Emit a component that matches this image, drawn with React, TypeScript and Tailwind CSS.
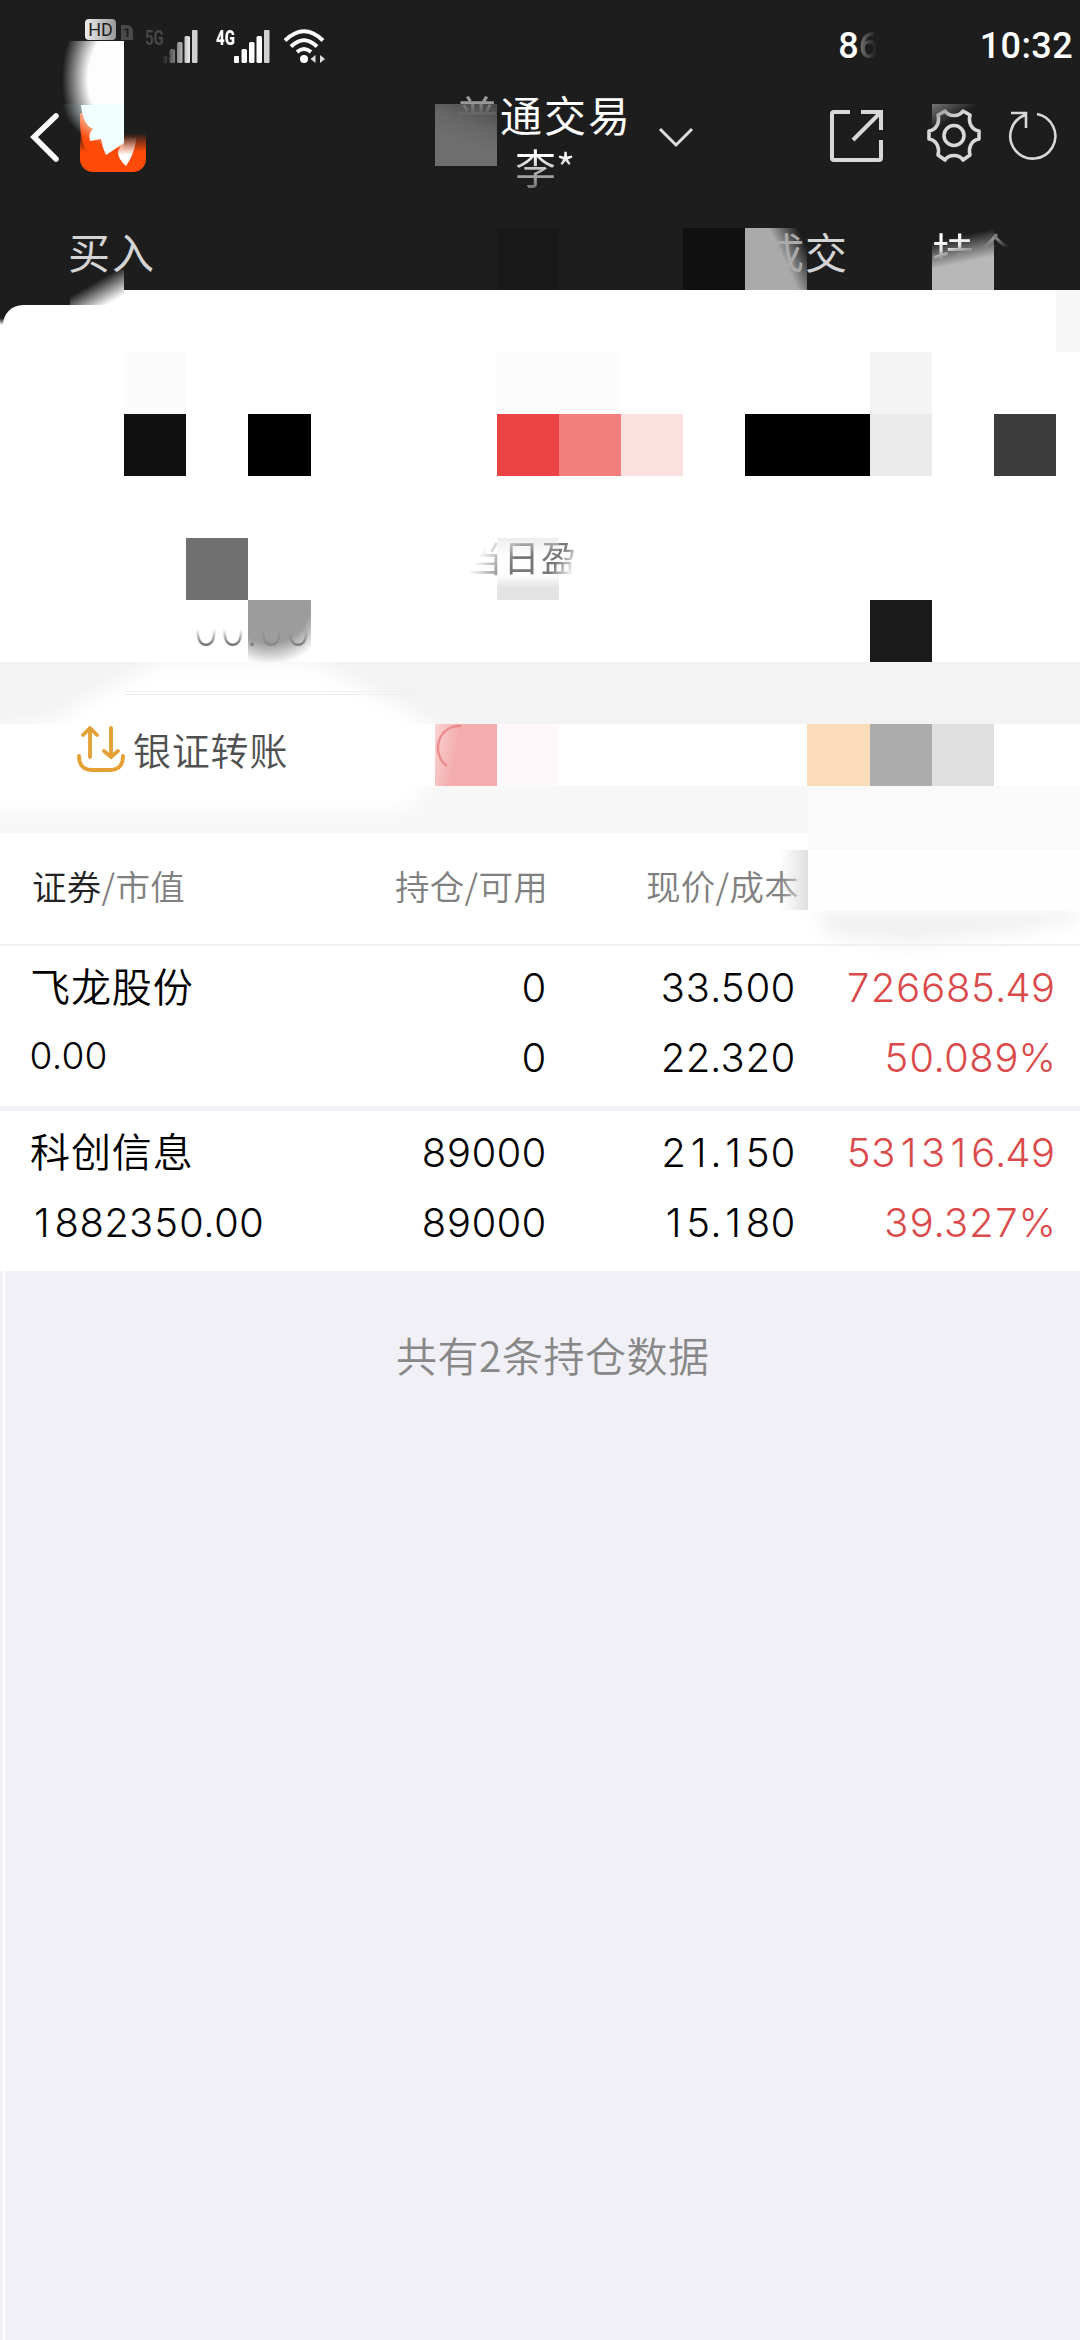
import clsx from 'clsx';

type Holding = {
  name: string;
  marketValue: string;
  total: string;
  available: string;
  price: string;
  cost: string;
  profit: string;
  ratio: string;
  smallValue?: boolean;
};

const HOLDINGS: Holding[] = [
  {
    name: '飞龙股份',
    marketValue: '0.00',
    total: '0',
    available: '0',
    price: '33.500',
    cost: '22.320',
    profit: '726685.49',
    ratio: '50.089%',
    smallValue: true,
  },
  {
    name: '科创信息',
    marketValue: '1882350.00',
    total: '89000',
    available: '89000',
    price: '21.150',
    cost: '15.180',
    profit: '531316.49',
    ratio: '39.327%',
  },
];

// Redaction tiles, placed on a 62px grid that starts below the status bar.
const TILES = [
  'col-start-8 row-start-1 bg-[linear-gradient(200deg,#6e6e6e00_0%,#6e6e6ecc_35%,#6e6e6e_60%)] bg-[#6e6e6e88]',
  'col-start-16 row-start-1 bg-[linear-gradient(150deg,#777_0%,#77777700_28%)]',
  'col-start-9 row-start-3 bg-[#191919]',
  'col-start-12 row-start-3 bg-[#101010]',
  'col-start-13 row-start-3 bg-[linear-gradient(65deg,#aaa_58%,#aaaaaa00_90%)]',
  'col-start-16 row-start-3 bg-[linear-gradient(168deg,#b8b8b800_18%,#b8b8b8_55%)]',
  'col-start-18 row-start-4 bg-[#f7f7f7]',
  'col-start-3 row-start-5 bg-[#fbfbfb]',
  'col-start-9 row-start-5 col-span-2 bg-[#fcfcfc]',
  'col-start-15 row-start-5 bg-[#f4f4f4]',
  'col-start-3 row-start-6 bg-[#101010]',
  'col-start-5 row-start-6 bg-black',
  'col-start-9 row-start-6 bg-[#ec4444]',
  'col-start-10 row-start-6 bg-[#f47e7e]',
  'col-start-11 row-start-6 bg-[#fce0e0]',
  'col-start-13 row-start-6 col-span-2 bg-black',
  'col-start-15 row-start-6 bg-[#eaeaea]',
  'col-start-17 row-start-6 bg-[#3c3c3c]',
  'col-start-4 row-start-8 bg-[#707070]',
  'col-start-9 row-start-8 bg-[linear-gradient(180deg,#e2e2e299_0%,#ffffff00_30%,#ffffff00_60%,#e3e3e3_80%)]',
  'col-start-15 row-start-9 bg-[#1a1a1a]',
  'col-start-8 row-start-11 bg-[linear-gradient(100deg,#f4adad88_0%,#f4adad_35%)]',
  'col-start-9 row-start-11 bg-[#fef8fa]',
  'col-start-14 row-start-11 bg-[#fbddba]',
  'col-start-15 row-start-11 bg-[#acacac]',
  'col-start-16 row-start-11 bg-[#e0e0e0]',
];

function SignalBars({ className }: { className?: string }) {
  return (
    <svg className={clsx('h-[33px] w-[36px]', className)} viewBox="0 0 36 33" fill="#fff">
      <rect x="0" y="26" width="5" height="7" rx="1" />
      <rect x="7.5" y="19" width="5.5" height="14" rx="1.5" />
      <rect x="15" y="12" width="5.5" height="21" rx="1.5" />
      <rect x="22.5" y="6" width="5.5" height="27" rx="1.5" />
      <rect x="30" y="0" width="5.5" height="33" rx="1" opacity=".8" />
    </svg>
  );
}

function StatusBar() {
  return (
    <div className="flex h-[90px] items-start text-white">
      <div className="ml-[85px] mt-[19px] flex h-[21px] w-[31px] items-center justify-center rounded-[4px] bg-linear-to-r from-[#eee] to-[#999] font-['Roboto',sans-serif] text-[18px] text-[#1d1d1d]">
        HD
      </div>
      <div className="ml-[5px] mt-[25px] h-[15px] w-3 rounded-tr-md bg-[#4a4a4a] text-center font-['Roboto',sans-serif] text-[13px] leading-[15px] font-bold text-[#1d1d1d]">
        1
      </div>
      <div className="ml-3 mt-[28px] w-[18px] origin-left scale-x-[.75] font-['Roboto',sans-serif] text-[20px] leading-[20px] font-bold text-[#484848]">
        5G
      </div>
      <SignalBars className="-ml-[1px] mt-[30px] [mask-image:linear-gradient(90deg,transparent_0%,#fff_85%)]" />
      <div className="ml-[18px] mt-[28px] w-[18px] origin-left scale-x-[.75] font-['Roboto',sans-serif] text-[20px] leading-[20px] font-black">
        4G
      </div>
      <SignalBars className="mt-[30px]" />
      <svg
        className="ml-[14px] mt-[29px] h-[35px] w-[42px]"
        viewBox="0 0 42 35"
        fill="none"
        stroke="#fff"
        strokeWidth="4"
      >
        <path d="M1 11.500Q20 -7 39 11.500M7 17.500Q20 5 33 17.500M13 23Q20 17 27 23" />
        <circle cx="20" cy="30" r="4" fill="#fff" stroke="none" />
        <path d="M26.500 30l5-4v8zM41 30l-5-4v8z" fill="#ddd" stroke="none" />
      </svg>
      <div className="ml-auto mt-[25px] flex pr-[7px] font-['Roboto',sans-serif] text-[36px] leading-[42px] font-medium">
        <span>8</span>
        <span className="w-[121px] bg-linear-to-r from-[#777] to-[#1d1d1d] to-15% bg-clip-text text-transparent">
          6
        </span>
        <span className="tracking-[.4px]">10:32</span>
      </div>
    </div>
  );
}

function TitleBar() {
  return (
    <div className="flex h-[110px] items-start">
      <svg
        className="ml-[29px] mt-[22px] h-[52px] w-[32px]"
        viewBox="0 0 32 52"
        fill="none"
        stroke="#fff"
        strokeWidth="5.500"
        strokeLinecap="round"
      >
        <path d="M27 4L5 25L27 47" />
      </svg>
      <svg className="ml-[19px] mt-[15px] h-[67px] w-[67px]" viewBox="0 0 67 67">
        <defs>
          <linearGradient id="logo" x1="0" y1="0" x2="0" y2="1">
            <stop offset=".42" stopColor="#ff4a08" stopOpacity="0" />
            <stop offset=".7" stopColor="#ff4a08" />
          </linearGradient>
          <linearGradient id="petal" x1="0" y1="0" x2="0" y2="1">
            <stop offset=".2" stopColor="#ccc" stopOpacity="0" />
            <stop offset=".7" stopColor="#fff" />
          </linearGradient>
        </defs>
        <rect x="0" y="0" width="66" height="67" rx="13" fill="url(#logo)" />
        <path d="M0 8H44V50H14Q0 46 0 16Z" fill="#ff4a08" />
        <path d="M4 0H44V38L26 50Q22 42 21 34L10 36Q8 28 13 24Q3 20 1 0Z" fill="#f0ffff" />
        <path d="M44 30L57 24Q57 46 46 61Q38 54 38 47Z" fill="url(#petal)" />
      </svg>
      <div className="-mt-[2px] ml-[309px] w-[176px] text-[42px] leading-[52px] text-white">
        <div className="whitespace-nowrap tracking-[2px]">
          <span className="text-[#999] [mask-image:linear-gradient(180deg,#000_35%,transparent_60%)]">
            普
          </span>
          通交易
        </div>
        <div className="bg-linear-to-b from-white from-30% to-[#777] to-90% bg-clip-text pl-[59px] text-[41px] text-transparent">
          李*
        </div>
      </div>
      <svg
        className="ml-[26px] mt-[35px] h-[24px] w-[36px]"
        viewBox="0 0 36 24"
        fill="none"
        stroke="#ddd"
        strokeWidth="3"
      >
        <path d="M2 4L18 20L34 4" />
      </svg>
      <div className="ml-auto mt-[17px] flex items-start">
        <svg
          className="h-[58px] w-[58px]"
          viewBox="0 0 58 58"
          fill="none"
          stroke="#d8d8d8"
          strokeWidth="4"
        >
          <path d="M23 5H7Q5 5 5 7V51Q5 53 7 53H52Q54 53 54 51V33" />
          <path d="M34 5H54V23M54 5L26 33" />
        </svg>
        <svg
          className="ml-[40px] h-[58px] w-[58px]"
          viewBox="0 0 58 58"
          fill="none"
          stroke="#d8d8d8"
          strokeWidth="3.600"
          strokeLinejoin="round"
        >
          <path d="M13 8L20 4C24 10 34 10 38 4L45 8C43 16 47 23 54 24V32C47 33 43 40 45 48L38 53C34 47 24 47 20 53L13 48C15 40 11 33 4 32V24C11 23 15 16 13 8Z" />
          <circle cx="29" cy="28.500" r="10" />
        </svg>
        <svg
          className="ml-[22px] mr-[21px] h-[56px] w-[54px]"
          viewBox="0 0 54 56"
          fill="none"
          stroke="#d8d8d8"
          strokeWidth="2.600"
        >
          <path d="M32 7A22.500 22.500 0 1 1 20 8M6 6H21V21" />
        </svg>
      </div>
    </div>
  );
}

function Tabs() {
  return (
    <nav className="flex h-[90px] items-start pt-[22px] text-[42px] leading-[57px] text-[#d4d4d4]">
      <span className="ml-[68px] tracking-[2px]">买入</span>
      <span className="ml-[606px] tracking-[1px]">
        <span className="text-[#aaa]">成</span>交
      </span>
      <span className="ml-[84px] text-white [mask-image:linear-gradient(165deg,#000_45%,transparent_60%)]">
        挂
      </span>
      <span className="[mask-image:linear-gradient(180deg,#0008_30%,transparent_45%)]">个</span>
    </nav>
  );
}

function Summary() {
  return (
    <section className="flex h-[372px] items-start bg-white">
      <div className="ml-[194px] mt-[322px] w-[120px] font-['Inter',sans-serif] text-[39px] leading-[40px] font-light tracking-[2.7px] text-[#444] [mask-image:linear-gradient(180deg,transparent_42%,#000_95%)]">
        00.00
      </div>
      <div className="ml-[152px] mt-[240px] w-[120px] text-[36px] leading-[52px] tracking-[1.5px] text-[#777] [mask-image:linear-gradient(120deg,transparent_18%,#000_44%,#000_72%,transparent_88%)]">
        当日盈
      </div>
    </section>
  );
}

function Transfer() {
  return (
    <section className="flex h-[187px] flex-col bg-white">
      <div className="h-[62px] bg-[#f3f3f3]" />
      <div className="h-[62px] bg-white" />
      <div className="flex h-[47px]">
        <div className="w-[808px] bg-[#f7f7f7]" />
        <div className="flex-1 bg-[#fafafa]" />
      </div>
    </section>
  );
}

// The transfer button glows over the grey bands above and below it.
function TransferButton() {
  return (
    <div className="absolute top-[662px] left-0 h-[148px] w-[440px]">
      <div className="absolute top-0 -left-[20px] h-[148px] w-[460px] blur-[10px]">
        <div className="h-full bg-white [clip-path:polygon(42%_-5%,68%_-5%,84%_18%,100%_46%,98%_78%,94%_100%,0_100%,0_46%,14%_42%,30%_14%)]" />
      </div>
      <div className="absolute top-[29px] left-[124px] h-[4px] w-[290px] border-y border-[#f0f0f0]" />
      <div className="relative flex items-start pt-[62px] pl-[75px]">
        <svg
          className="h-[50px] w-[52px]"
          viewBox="0 0 52 50"
          fill="none"
          stroke="#e4a035"
          strokeWidth="3.800"
          strokeLinecap="round"
          strokeLinejoin="round"
        >
          <path d="M15 33V5M8 11L15 4L22 11M36 4V32M29 27L36 33L43 27" />
          <path d="M4 32Q4 46 17 46H35Q48 46 48 32" />
        </svg>
        <span className="ml-[6px] -mt-[3px] text-[38px] leading-[56px] font-[350] tracking-[.8px] text-[#505050]">
          银证转账
        </span>
      </div>
    </div>
  );
}

function TableHeader() {
  return (
    <div className="flex h-[97px] items-start border-b-2 border-[#f0f0f5] pt-[10px] text-[34.5px] leading-[52px] font-[350] tracking-[.3px] text-[#808080]">
      <span className="w-[300px] pl-[32px]">
        <span className="text-[#222]">证券</span>/市值
      </span>
      <span className="w-[248px] text-right">持仓/可用</span>
      <span className="w-[251px] text-right">现价/成本</span>
    </div>
  );
}

// Inter's tabular "1" has a foot; use the plain one, centred in a digit's width.
function Digits({ value }: { value: string }) {
  return (
    <>
      {value.split(/(1)/).map((part, i) =>
        part === '1' ? (
          <span
            key={i}
            className="inline-block w-[24.7px] text-center [font-feature-settings:'tnum'_0]"
          >
            1
          </span>
        ) : (
          part
        )
      )}
    </>
  );
}

function HoldingRow({ holding }: { holding: Holding }) {
  return (
    <div className="grid h-[160px] grid-cols-[300px_246px_249px_260px] grid-rows-[70px_70px] bg-white pt-[8px] text-right font-['Inter','Noto_Sans_CJK_SC',sans-serif] text-[40px] leading-[68px] font-light tracking-[-.9px] text-black [font-feature-settings:'tnum']">
      <span className="pl-[30px] text-left font-[350] tracking-[.9px]">{holding.name}</span>
      <span>{holding.total}</span>
      <span>
        <Digits value={holding.price} />
      </span>
      <span className="text-[#db4a4a]">
        <Digits value={holding.profit} />
      </span>
      <span
        className={clsx('pl-[29px] text-left', holding.smallValue && 'text-[37px] leading-[64px]')}
      >
        <Digits value={holding.marketValue} />
      </span>
      <span>{holding.available}</span>
      <span>
        <Digits value={holding.cost} />
      </span>
      <span className="text-[#db4a4a]">{holding.ratio}</span>
    </div>
  );
}

function Redactions() {
  return (
    <>
      <div className="absolute top-[41px] left-[62px] h-[63px] w-[62px] bg-[radial-gradient(62px_88px_at_100%_60%,#fdfdfd_58%,#fdfdfd00_100%)]" />
      <div className="absolute top-[104px] left-[62px] h-[50px] w-[62px] bg-[radial-gradient(62px_50px_at_100%_-10%,#f0ffff_50%,#f0ffff00_100%)]" />
      <div className="absolute top-[270px] left-[70px] h-[35px] w-[54px] bg-[linear-gradient(330deg,#fff_15%,#ffffff00_60%)]" />
      <div className="absolute top-[600px] left-[248px] h-[62px] w-[63px] bg-[radial-gradient(60px_62px_at_35%_0%,#8b8b8b_70%,#8b8b8b00_105%)] opacity-85" />
      <div className="absolute top-[850px] left-[780px] h-[60px] w-[28px] bg-linear-to-r from-transparent to-[#e0e0e0]" />
      <div className="absolute top-[833px] left-[808px] h-[17px] w-[272px] bg-[#fafafa]" />
      <div className="absolute top-[850px] left-[808px] h-[61px] w-[272px] bg-[#fefefe]" />
      <div className="absolute top-[911px] left-[770px] h-[60px] w-[310px] overflow-hidden">
        <div className="h-full blur-[8px]">
          <div className="h-full bg-[#f1f1f1] [clip-path:polygon(8%_-40%,120%_-40%,110%_5%,80%_35%,45%_55%,20%_42%)]" />
        </div>
      </div>
      <div className="absolute top-[104px] left-0 grid auto-rows-[62px] grid-cols-[repeat(18,62.12px)] overflow-hidden">
        {TILES.map((tile) => (
          <div key={tile} className={tile} />
        ))}
      </div>
      <svg
        className="absolute top-[724px] left-[435px] h-[50px] w-[40px]"
        viewBox="0 0 40 50"
        fill="none"
        stroke="#e88080"
        strokeWidth="2.500"
      >
        <path d="M26 2A21 22 0 0 0 12 42" opacity=".8" />
      </svg>
    </>
  );
}

export default function App(): JSX.Element {
  return (
    <div className="relative flex h-[2340px] w-[1080px] flex-col overflow-hidden bg-[#f0f0f6] font-['Noto_Sans_CJK_SC',sans-serif]">
      <header className="h-[290px] bg-[#1d1d1d]">
        <StatusBar />
        <TitleBar />
        <Tabs />
      </header>
      <Summary />
      <div className="absolute top-[290px] left-0 h-[35px] w-[124px] bg-linear-to-b from-[#1d1d1d] from-80% to-white">
        <div className="mt-[15px] ml-[3px] h-[20px] rounded-tl-[24px] bg-white" />
      </div>
      <Transfer />
      <main className="flex flex-1 flex-col">
        <div className="bg-white">
          <TableHeader />
        </div>
        <div className="flex flex-col gap-[5px]">
          {HOLDINGS.map((holding) => (
            <HoldingRow key={holding.name} holding={holding} />
          ))}
        </div>
        <div className="flex-1 border-l-[3px] border-[#f0f0f6]">
          <div className="h-full border-l-2 border-white pt-[53px] pl-[391px] text-[41px] leading-[60px] font-[350] tracking-[.5px] text-[#888]">
            共有2条持仓数据
          </div>
        </div>
      </main>
      <TransferButton />
      <Redactions />
    </div>
  );
}
